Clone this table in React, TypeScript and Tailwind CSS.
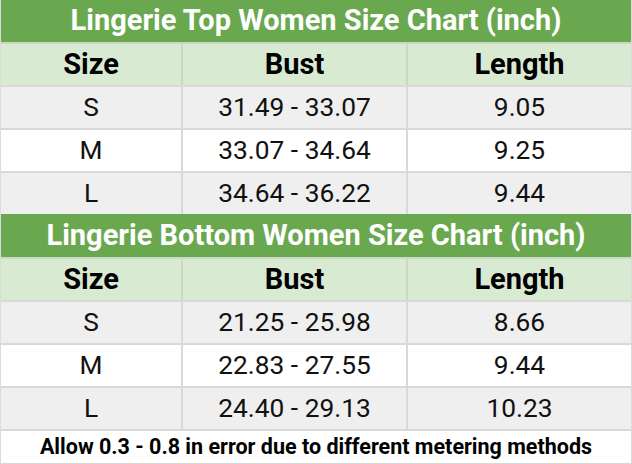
import React from "react";

type R = [string, string, string];

const top: R[] = [
  ["S", "31.49 - 33.07", "9.05"],
  ["M", "33.07 - 34.64", "9.25"],
  ["L", "34.64 - 36.22", "9.44"],
];
const bottom: R[] = [
  ["S", "21.25 - 25.98", "8.66"],
  ["M", "22.83 - 27.55", "9.44"],
  ["L", "24.40 - 29.13", "10.23"],
];

function HeaderRow() {
  return (
    <div className="flex h-[43px] border-t-2 border-[#c9d9c3] bg-[#d9ead3] text-[29px] font-bold text-black">
      <div className="flex w-[180px] items-center justify-center">Size</div>
      <div className="flex w-[225px] items-center justify-center border-l-2 border-[#c9d9c3]">Bust</div>
      <div className="flex w-[225px] items-center justify-center border-l-2 border-[#c9d9c3]">Length</div>
    </div>
  );
}

function DataRow({ r, gray }: { r: R; gray: boolean }) {
  return (
    <div
      className={
        gray
          ? "flex h-[43px] border-t-2 border-[#d9d9d9] bg-[#efefef] text-[26.3px] text-[#111]"
          : "flex h-[43px] border-t-2 border-[#d9d9d9] bg-white text-[26.3px] text-[#111]"
      }
    >
      <div className="flex w-[180px] items-center justify-center">{r[0]}</div>
      <div className="flex w-[225px] items-center justify-center border-l-2 border-[#d9d9d9]">{r[1]}</div>
      <div className="flex w-[225px] items-center justify-center border-l-2 border-[#d9d9d9]">{r[2]}</div>
    </div>
  );
}

function Section({ title, rows, h }: { title: string; rows: R[]; h: string }) {
  return (
    <div>
      <div className={`flex ${h} items-center justify-center bg-[#6aa84f] text-[29px] font-bold text-white`}>
        {title}
      </div>
      <HeaderRow />
      {rows.map((r, i) => (
        <DataRow key={i} r={r} gray={i !== 1} />
      ))}
    </div>
  );
}

export default function App() {
  return (
    <div
      className="h-[464px] w-[632px] overflow-hidden bg-white"
      style={{ fontFamily: "Roboto, 'Liberation Sans', sans-serif" }}
    >
      <div className="border-x border-[#dcdcdc]">
        <Section title="Lingerie Top Women Size Chart (inch)" rows={top} h="h-[42px]" />
        <Section title="Lingerie Bottom Women Size Chart (inch)" rows={bottom} h="h-[43px]" />
        <div className="flex h-[35px] items-center justify-center border-t-2 border-b border-[#d9d9d9] text-[21.5px] font-bold text-black">
          Allow 0.3 - 0.8 in error due to different metering methods
        </div>
      </div>
    </div>
  );
}
